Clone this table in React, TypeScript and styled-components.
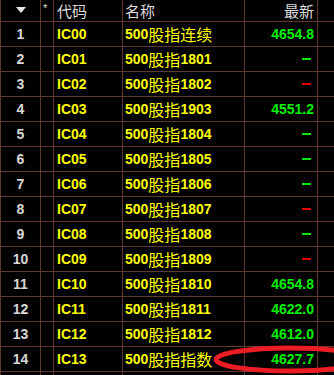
import React from 'react'
import styled, { createGlobalStyle } from 'styled-components'

const GlobalStyle = createGlobalStyle`
  html, body {
    margin: 0;
    padding: 0;
    background: #000;
  }
  body {
    font-family: 'Liberation Sans', 'Noto Sans CJK SC', sans-serif;
  }
`

const LINE = '#5e3a2c'
const COLS = '39px 12px 68px 121px 72px 16px'

const Board = styled.div`
  position: relative;
  width: 334px;
  height: 375px;
  overflow: hidden;
  box-sizing: border-box;
  padding-left: 1px;
  background: ${LINE};
  display: flex;
  flex-direction: column;
  gap: 1px;
`

const Row = styled.div<{ head?: boolean }>`
  display: grid;
  grid-template-columns: ${COLS};
  column-gap: 1px;
  height: ${(p) => (p.head ? '21px' : '24px')};
  flex-shrink: 0;
`

const Cell = styled.div<{ align?: 'left' | 'center' | 'right' }>`
  background: #000;
  display: flex;
  align-items: center;
  justify-content: ${(p) => (p.align === 'right' ? 'flex-end' : p.align === 'center' ? 'center' : 'flex-start')};
  overflow: hidden;
  white-space: nowrap;
`

const HeadText = styled.span`
  font-family: 'Noto Sans CJK SC', sans-serif;
  font-size: 15px;
  color: #dcdcdc;
  line-height: 19px;
`

const HeadCell = styled(Cell)<{ pad?: string }>`
  padding: ${(p) => p.pad || '0'};
  align-items: flex-start;
  overflow: visible;
`

const Triangle = styled.span`
  width: 0;
  height: 0;
  margin-top: 7px;
  border-left: 5px solid transparent;
  border-right: 5px solid transparent;
  border-top: 6px solid #e8e8e8;
`

const Star = styled.span`
  font-size: 11px;
  color: #dcdcdc;
  margin: 3px 0 0 2px;
  line-height: 1;
`

const Num = styled.span`
  font-weight: bold;
  font-size: 14px;
  color: #d8d8d8;
`

const Code = styled.span`
  font-weight: bold;
  font-size: 14px;
  color: #ffff00;
  padding-left: 3px;
`

const Name = styled.span`
  color: #ffff00;
  padding-left: 2px;
  display: flex;
  align-items: center;
`

const NameDigits = styled.span`
  font-weight: bold;
  font-size: 14px;
`

const NameHan = styled.span`
  font-family: 'Noto Sans CJK SC', sans-serif;
  font-size: 16px;
  line-height: 1;
`

const Price = styled.span`
  font-weight: bold;
  font-size: 14px;
  color: #00f000;
  padding-right: 3px;
`

const Dash = styled.span<{ up: boolean }>`
  width: 9px;
  height: 2px;
  margin-right: 6px;
  background: ${(p) => (p.up ? '#00e800' : '#e00000')};
`

const Mark = styled.svg`
  position: absolute;
  left: 0;
  top: 0;
  pointer-events: none;
`

type Quote = { code: string; han: string; tail?: string; price?: string; up?: boolean }

const rows: Quote[] = [
  { code: 'IC00', han: '股指连续', price: '4654.8' },
  { code: 'IC01', han: '股指', tail: '1801', up: true },
  { code: 'IC02', han: '股指', tail: '1802', up: false },
  { code: 'IC03', han: '股指', tail: '1903', price: '4551.2' },
  { code: 'IC04', han: '股指', tail: '1804', up: true },
  { code: 'IC05', han: '股指', tail: '1805', up: true },
  { code: 'IC06', han: '股指', tail: '1806', up: true },
  { code: 'IC07', han: '股指', tail: '1807', up: false },
  { code: 'IC08', han: '股指', tail: '1808', up: true },
  { code: 'IC09', han: '股指', tail: '1809', up: false },
  { code: 'IC10', han: '股指', tail: '1810', price: '4654.8' },
  { code: 'IC11', han: '股指', tail: '1811', price: '4622.0' },
  { code: 'IC12', han: '股指', tail: '1812', price: '4612.0' },
  { code: 'IC13', han: '股指指数', price: '4627.7' },
]

const App: React.FC = () => (
  <>
    <GlobalStyle />
    <Board>
      <Row head>
        <HeadCell align="center">
          <Triangle />
        </HeadCell>
        <HeadCell>
          <Star>*</Star>
        </HeadCell>
        <HeadCell pad="1px 0 0 3px">
          <HeadText>代码</HeadText>
        </HeadCell>
        <HeadCell pad="1px 0 0 2px">
          <HeadText>名称</HeadText>
        </HeadCell>
        <HeadCell align="right" pad="1px 3px 0 0">
          <HeadText>最新</HeadText>
        </HeadCell>
        <HeadCell />
      </Row>
      {rows.map((r, i) => (
        <Row key={r.code}>
          <Cell align="center">
            <Num>{i + 1}</Num>
          </Cell>
          <Cell />
          <Cell>
            <Code>{r.code}</Code>
          </Cell>
          <Cell>
            <Name>
              <NameDigits>500</NameDigits>
              <NameHan>{r.han}</NameHan>
              {r.tail && <NameDigits>{r.tail}</NameDigits>}
            </Name>
          </Cell>
          <Cell align="right">{r.price ? <Price>{r.price}</Price> : <Dash up={!!r.up} />}</Cell>
          <Cell />
        </Row>
      ))}
      <Row>
        <Cell />
        <Cell />
        <Cell />
        <Cell />
        <Cell />
        <Cell />
      </Row>
      <Mark width="334" height="375" viewBox="0 0 334 375">
        <ellipse cx="290" cy="359.5" rx="74" ry="11.5" fill="none" stroke="#ec1c24" strokeWidth="5" />
      </Mark>
    </Board>
  </>
)

export default App
